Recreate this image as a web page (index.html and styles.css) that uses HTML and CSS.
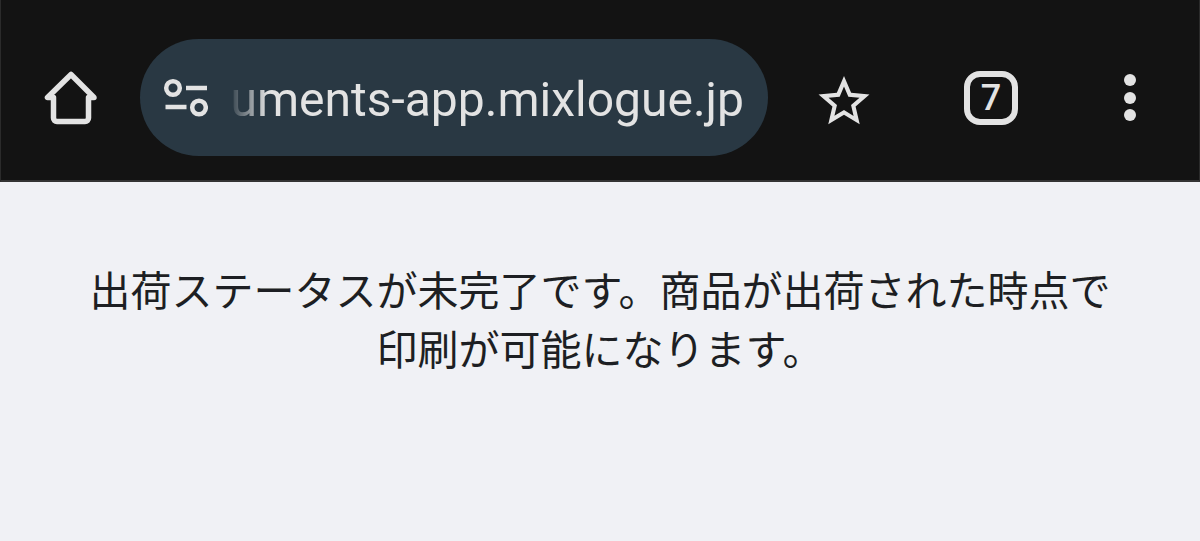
FILE: index.html
```html
<!DOCTYPE html>
<html lang="ja">
<head>
    <meta charset="UTF-8">
    <meta name="viewport" content="width=device-width, initial-scale=1.0">
    <title>出荷ステータス</title>
    <link rel="stylesheet" href="styles.css">
</head>
<body>
    <header class="toolbar">
        <button class="icon-button" type="button" aria-label="ホーム">
            <svg width="54" height="56" viewBox="0 0 54 56" fill="none" stroke="#e3e3e3" stroke-width="5.500" stroke-linecap="round" stroke-linejoin="round">
                <path d="M3.500 27.500H9.500V48a3.500 3.500 0 0 0 3.500 3.500H41a3.500 3.500 0 0 0 3.500-3.500V27.500H50L27 4.500Z" />
            </svg>
        </button>
        <div class="address-bar">
            <button class="site-button" type="button" aria-label="サイト情報">
                <svg width="46" height="40" viewBox="0 0 46 40" fill="none" stroke="#e3e3e3" stroke-width="4.500">
                    <circle cx="11" cy="10" r="6.800" />
                    <path d="M24 10H45M3.500 29H24.500" />
                    <circle cx="37" cy="29.500" r="6.800" />
                </svg>
            </button>
            <input class="address" type="text" value="uments-app.mixlogue.jp" aria-label="アドレス" spellcheck="false">
        </div>
        <div class="actions">
            <button class="icon-button" type="button" aria-label="ブックマーク">
                <svg width="54" height="56" viewBox="1.4 -0.35 21.2 22" fill="#e3e3e3">
                    <path d="M22 9.240l-7.190-.620L12 2 9.190 8.630 2 9.240l5.460 4.730L5.820 21 12 17.270 18.180 21l-1.630-7.030L22 9.240zM12 15.400l-3.760 2.270 1-4.280-3.320-2.880 4.380-.380L12 6.100l1.710 4.040 4.380.380-3.320 2.880 1 4.280L12 15.400z" />
                </svg>
            </button>
            <button class="icon-button tabs" type="button" aria-label="タブ 7">7</button>
            <button class="icon-button menu" type="button" aria-label="メニュー">
                <svg width="38" height="56" viewBox="0 0 38 56" fill="#e3e3e3">
                    <circle cx="19" cy="10" r="6" />
                    <circle cx="19" cy="28" r="6" />
                    <circle cx="19" cy="45" r="6" />
                </svg>
            </button>
        </div>
    </header>
    <main class="content">
        <p class="message">出荷ステータスが未完了です。商品が出荷された時点で印刷が可能になります。</p>
    </main>
</body>
</html>
```
FILE: styles.css
```css
* {
    box-sizing: border-box;
}
body {
    display: flex;
    flex-direction: column;
    min-height: 100vh;
    margin: 0;
    background: #f0f1f5;
    color: #1d1f23;
    font-family: "Noto Sans CJK JP", sans-serif;
}
button {
    padding: 0;
    border: none;
    background: none;
    color: #e3e3e3;
    cursor: pointer;
}
svg {
    display: block;
}
.toolbar {
    display: flex;
    align-items: center;
    padding: 39px 50px 24px 43px;
    background: #131313;
    border: 1px solid #2b2b2b;
    border-top: none;
    border-bottom: 2px solid #333;
}
.icon-button {
    flex: none;
    width: 54px;
}
.address-bar {
    display: flex;
    flex: 1;
    align-items: center;
    min-width: 0;
    height: 117px;
    margin-left: 42px;
    padding: 0 24px 0 22px;
    border-radius: 59px;
    background: #293843;
}
.site-button {
    flex: none;
    margin-right: 20px;
}
.address {
    flex: 1;
    min-width: 0;
    padding: 4px 0 0;
    border: none;
    outline: none;
    background: none;
    color: #e3e3e3;
    font-family: Roboto, sans-serif;
    font-size: 48px;
    line-height: 64px;
    text-align: right;
    /* fades out the cut-off start of the address */
    mask-image: linear-gradient(to right, transparent, #000 40px);
}
.actions {
    display: flex;
    align-items: center;
    gap: 93px;
    margin-left: 49px;
}
.tabs {
    height: 54px;
    border: 6px solid #e3e3e3;
    border-radius: 16px;
    font: 500 36px Roboto, sans-serif;
    line-height: 42px;
}
.menu {
    width: 38px;
}
.content {
    padding: 77px 80px 0;
}
.message {
    margin: 0;
    font-size: 41px;
    line-height: 59px;
    text-align: center;
}
```
